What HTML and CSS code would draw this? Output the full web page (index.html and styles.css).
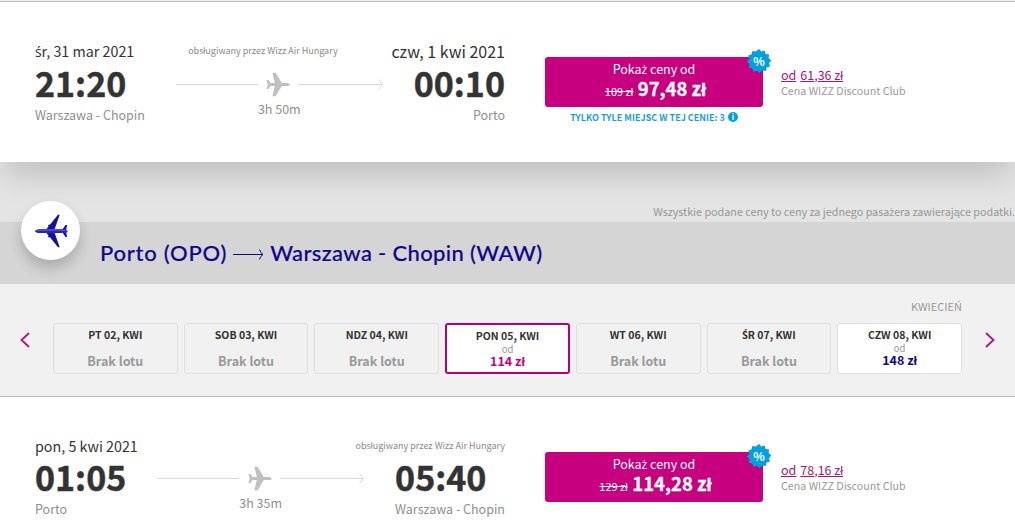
FILE: index.html
```
<!DOCTYPE html>
<html lang="pl">
    <head>
        <title>Wybierz lot</title>
        <meta charset="utf-8">
        <meta name="viewport" content="width=device-width, initial-scale=1.0">
        <link rel="stylesheet" href="styles.css">
    </head>
    <body>
        <svg class="sprite" width="0" height="0">
            <symbol id="plane" viewBox="0 0 24 25">
                <path d="M23.8 12.5c0 .9-1.8 1.6-3.300 1.6h-4.700L9.600 24.300H6.400l2.400-10.200H4.500L2.600 16.900H.5l1.200-4.400L.5 8.100h2.100l1.900 2.800h4.300L6.400.7h3.200l6.200 10.200h4.700c1.500 0 3.300.7 3.300 1.600z"/>
            </symbol>
            <symbol id="route-head" viewBox="0 0 84 12">
                <path d="M0 6.500H83M79.500 1.500L83.500 6.500L79.500 11.500"/>
            </symbol>
            <symbol id="burst" viewBox="0 0 24 24">
                <path d="M12 0l2.300 2.600 3.300-1.100 1 3.400 3.500.6-.5 3.500L24.300 11.500l-2.300 2.700 1 3.400-3.400 1-.7 3.400-3.500-.5L12.500 24l-2.700-2.200-3.300 1-1.200-3.300-3.400-.8.500-3.500L0 12.500l2.200-2.800-.9-3.300 3.300-1.100.8-3.400 3.500.6z"/>
            </symbol>
        </svg>
        <main>
            <section class="flight flight-out">
                <div class="itinerary">
                    <div class="itinerary-top">
                        <span class="date"><span class="pl">ś</span>r, 31 mar 2021</span>
                        <span class="carrier">obsługiwany przez Wizz Air Hungary</span>
                        <span class="date date-big">czw, 1 kwi 2021</span>
                    </div>
                    <div class="itinerary-main">
                        <div class="stop">
                            <div class="time">21:20</div>
                            <div class="city">Warszawa - Chopin</div>
                        </div>
                        <div class="route">
                            <div class="route-line">
                                <span class="line"></span>
                                <svg class="route-plane"><use href="#plane"/></svg>
                                <svg class="route-arrow"><use href="#route-head"/></svg>
                            </div>
                            <div class="duration">3h 50m</div>
                        </div>
                        <div class="stop stop-end">
                            <div class="time">00:10</div>
                            <div class="city">Porto</div>
                        </div>
                    </div>
                </div>
                <div class="fare">
                    <div class="fare-button">
                        <span class="fare-label">Poka<span class="pl">ż</span> ceny od</span>
                        <span class="fare-price"><s>109 zł</s> <b>97,48 zł</b></span>
                        <div class="badge"><svg><use href="#burst"/></svg><span>%</span></div>
                    </div>
                    <div class="seats">TYLKO TYLE MIEJSC W TEJ CENIE: 3 <i class="info">i</i></div>
                </div>
                <div class="club">
                    <div class="club-price"><a>od</a><a>61,36 zł</a></div>
                    <div class="club-text">Cena WIZZ Discount Club</div>
                </div>
            </section>

            <div class="note">Wszystkie podane ceny to ceny za jednego pasa<span class="pl">ż</span>era zawierające podatki.</div>

            <header class="direction">
                <div class="direction-icon">
                    <svg width="34" height="34" viewBox="0 0 34 34">
                        <path fill="#14129c" d="M12 15.500l2.500-3-.6-1.600 2.200-.4L24 .8h1.700L20.500 15.500zM12 18.500l2.500 3-.6 1.600 2.200.4L24 33.200h1.700L20.500 18.500zM28 16l3.600-5h1.600L32 16zM28 18l3.600 5h1.600L32 18z"/>
                        <path fill="#4b45d1" d="M.8 17c1.400-1.600 3.500-2.100 6-2.100h20l6.500.8v2.600l-6.500.8h-20c-2.500 0-4.600-.5-6-2.100z"/>
                        <path fill="#2a25b4" d="M.8 17h32.500v1.300l-6.500.8h-20c-2.500 0-4.600-.5-6-2.100z"/>
                    </svg>
                </div>
                <h2>
                    <span class="from">Porto (OPO)</span>
                    <svg class="heading-arrow" width="31" height="12" viewBox="0 0 31 12"><path d="M0 6.500H30M26.500 1.500Q27.500 5 30 6.500Q27.500 8 26.500 11.500"/></svg>
                    <span>Warszawa - Chopin (WAW)</span>
                </h2>
            </header>

            <section class="calendar">
                <div class="month">KWIECIEŃ</div>
                <div class="calendar-row">
                    <svg class="nav" viewBox="0 0 10 16"><path d="M9 1L1.500 8L9 15"/></svg>
                    <div class="days">
                        <div class="day"><b>PT 02, KWI</b><span class="none">Brak lotu</span></div>
                        <div class="day"><b>SOB 03, KWI</b><span class="none">Brak lotu</span></div>
                        <div class="day"><b>NDZ 04, KWI</b><span class="none">Brak lotu</span></div>
                        <div class="day open selected"><b>PON 05, KWI</b><small>od</small><span class="price">114 zł</span></div>
                        <div class="day"><b>WT 06, KWI</b><span class="none">Brak lotu</span></div>
                        <div class="day"><b><span class="pl">Ś</span>R 07, KWI</b><span class="none">Brak lotu</span></div>
                        <div class="day open"><b>CZW 08, KWI</b><small>od</small><span class="price">148 zł</span></div>
                    </div>
                    <svg class="nav" viewBox="0 0 10 16"><path d="M1 1L8.500 8L1 15"/></svg>
                </div>
            </section>

            <section class="flight flight-back">
                <div class="itinerary">
                    <div class="itinerary-top">
                        <span class="date">pon, 5 kwi 2021</span>
                        <span class="carrier">obsługiwany przez Wizz Air Hungary</span>
                    </div>
                    <div class="itinerary-main">
                        <div class="stop">
                            <div class="time">01:05</div>
                            <div class="city">Porto</div>
                        </div>
                        <div class="route">
                            <div class="route-line">
                                <span class="line"></span>
                                <svg class="route-plane"><use href="#plane"/></svg>
                                <svg class="route-arrow"><use href="#route-head"/></svg>
                            </div>
                            <div class="duration">3h 35m</div>
                        </div>
                        <div class="stop">
                            <div class="time">05:40</div>
                            <div class="city">Warszawa - Chopin</div>
                        </div>
                    </div>
                </div>
                <div class="fare">
                    <div class="fare-button">
                        <span class="fare-label">Poka<span class="pl">ż</span> ceny od</span>
                        <span class="fare-price"><s>129 zł</s> <b>114,28 zł</b></span>
                        <div class="badge"><svg><use href="#burst"/></svg><span>%</span></div>
                    </div>
                </div>
                <div class="club">
                    <div class="club-price"><a>od</a><a>78,16 zł</a></div>
                    <div class="club-text">Cena WIZZ Discount Club</div>
                </div>
            </section>
        </main>
    </body>
</html>
```

FILE: styles.css
```
* {
    margin: 0;
    padding: 0;
    box-sizing: border-box;
}
body {
    width: 1015px;
    height: 526px;
    overflow: hidden;
    background-color: #f1f1f1;
    font-family: "Noto Sans CJK SC", sans-serif;
    color: #333;
    white-space: nowrap;
}
main {
    padding-top: 1px;
}
.sprite {
    position: absolute;
}
.pl {
    font-family: "Open Sans", sans-serif;
    font-size: 0.97em;
    line-height: 1;
}

/* flight rows */
.flight {
    display: flex;
    align-items: flex-start;
    height: 161px;
    padding: 39px 0 0 35px;
    border-top: 1px solid #bdbdbd;
    background-color: white;
}
.flight-out {
    position: relative;
    box-shadow: 0 18px 28px -4px rgba(0, 0, 0, 0.15);
}
.flight-back {
    height: 130px;
}
.itinerary {
    width: 470px;
}
.itinerary-top {
    display: flex;
    justify-content: space-between;
    align-items: center;
    height: 20px;
}
.date {
    font-size: 14.3px;
    line-height: 20px;
}
.date-big {
    font-size: 16px;
}
.carrier {
    font-size: 9px;
    line-height: 18px;
    color: #8a8a8a;
}
.itinerary-main {
    display: flex;
    justify-content: space-between;
    padding-top: 2px;
}
.flight-back .itinerary-main {
    padding-top: 1px;
}
.time {
    font-size: 34px;
    line-height: 40px;
    height: 43px;
    font-weight: bold;
    -webkit-text-stroke: 0.5px #333;
}
.city {
    font-size: 12.5px;
    line-height: 18px;
    color: #8f8f8f;
}
.stop-end {
    text-align: right;
}
.route {
    width: 207px;
    padding-top: 8px;
    text-align: center;
}
.route-line {
    display: flex;
    justify-content: space-between;
    align-items: center;
    height: 26px;
}
.line {
    width: 82px;
    height: 1px;
    background-color: #d8d8d8;
}
.route-plane {
    width: 24px;
    height: 25px;
    fill: #c0c0c0;
}
.route-arrow {
    width: 84px;
    height: 12px;
    fill: none;
    stroke: #d8d8d8;
}
.duration {
    font-size: 12.5px;
    line-height: 24px;
    color: #8f8f8f;
}

/* price button */
.fare {
    width: 218px;
    margin: 16px 18px 0 40px;
    text-align: center;
}
.fare-button {
    position: relative;
    display: flex;
    flex-direction: column;
    height: 50px;
    padding-top: 3px;
    border-radius: 3px;
    background-color: #c6007e;
    color: white;
}
.fare-label {
    font-size: 12.5px;
    line-height: 18px;
}
.fare-price {
    padding-left: 3px;
    font-size: 11px;
    line-height: 20px;
}
.fare-price b {
    margin-left: 2px;
    font-size: 18.5px;
    -webkit-text-stroke: 0.3px white;
}
.badge {
    position: absolute;
    top: -8px;
    right: -8px;
    width: 24px;
    height: 24px;
    font-size: 12px;
    line-height: 23px;
    font-weight: bold;
}
.badge svg {
    position: absolute;
    left: 0;
    width: 24px;
    height: 24px;
    overflow: visible;
    fill: #00a0df;
}
.badge span {
    position: relative;
}
.seats {
    font-size: 9px;
    line-height: 22px;
    font-weight: bold;
    color: #1b9dd9;
}
.info {
    display: inline-block;
    width: 10px;
    height: 10px;
    margin-left: 1px;
    border-radius: 50%;
    background-color: #00a0df;
    font-size: 8px;
    line-height: 9px;
    font-style: normal;
    color: white;
    vertical-align: 1px;
}
.club {
    padding-top: 25px;
}
.club-price {
    display: flex;
    gap: 4px;
    font-size: 12.5px;
    line-height: 17px;
    color: #a6147a;
    text-decoration: underline;
}
.club-text {
    font-size: 10.7px;
    line-height: 16px;
    color: #999;
}

/* direction heading */
.note {
    height: 60px;
    padding-top: 40px;
    background-color: #e4e4e4;
    font-size: 10.75px;
    line-height: 20px;
    text-align: right;
    color: #979797;
}
.direction {
    position: relative;
    height: 62px;
    padding-left: 100px;
    background-color: #d5d5d5;
}
.direction-icon {
    position: absolute;
    top: -21px;
    left: 21px;
    display: flex;
    justify-content: center;
    align-items: center;
    width: 59px;
    height: 59px;
    border-radius: 50%;
    background-color: white;
    box-shadow: 0 8px 14px rgba(0, 0, 0, 0.2);
}
h2 {
    display: flex;
    align-items: center;
    gap: 6px;
    height: 60px;
    font-family: Lato, sans-serif;
    font-size: 22px;
    font-weight: 500;
    letter-spacing: 0.35px;
    color: #10078a;
    -webkit-text-stroke: 0.15px #10078a;
}
.from {
    letter-spacing: 0.75px;
}
.heading-arrow {
    margin-top: 3px;
    fill: none;
    stroke: #10078a;
}

/* calendar */
.calendar {
    height: 112px;
    padding: 12px 20px 0;
}
.month {
    padding-right: 33px;
    font-size: 11px;
    line-height: 20px;
    text-align: right;
    color: #999;
}
.calendar-row {
    display: flex;
    justify-content: space-between;
    padding-top: 7px;
}
.nav {
    width: 10px;
    height: 16px;
    margin-top: 9px;
    fill: none;
    stroke: #b5127f;
    stroke-width: 1.8;
}
.days {
    display: grid;
    grid-template-columns: repeat(7, 1fr);
    gap: 6px;
    width: 909px;
}
.day {
    display: flex;
    flex-direction: column;
    align-items: center;
    height: 51px;
    border: 1px solid #dedede;
    border-radius: 3px;
}
.day b {
    height: 18px;
    font-size: 10.5px;
    line-height: 22px;
}
.day small {
    height: 10px;
    font-size: 9.5px;
    line-height: 12px;
    color: #999;
}
.none {
    font-size: 12.5px;
    line-height: 38px;
    font-weight: bold;
    color: #999;
}
.price {
    font-size: 12.5px;
    line-height: 16px;
    font-weight: bold;
    color: #10078a;
}
.open {
    background-color: white;
}
.selected {
    border: 2px solid #b5007a;
}
.selected .price {
    color: #c6007e;
}
```
